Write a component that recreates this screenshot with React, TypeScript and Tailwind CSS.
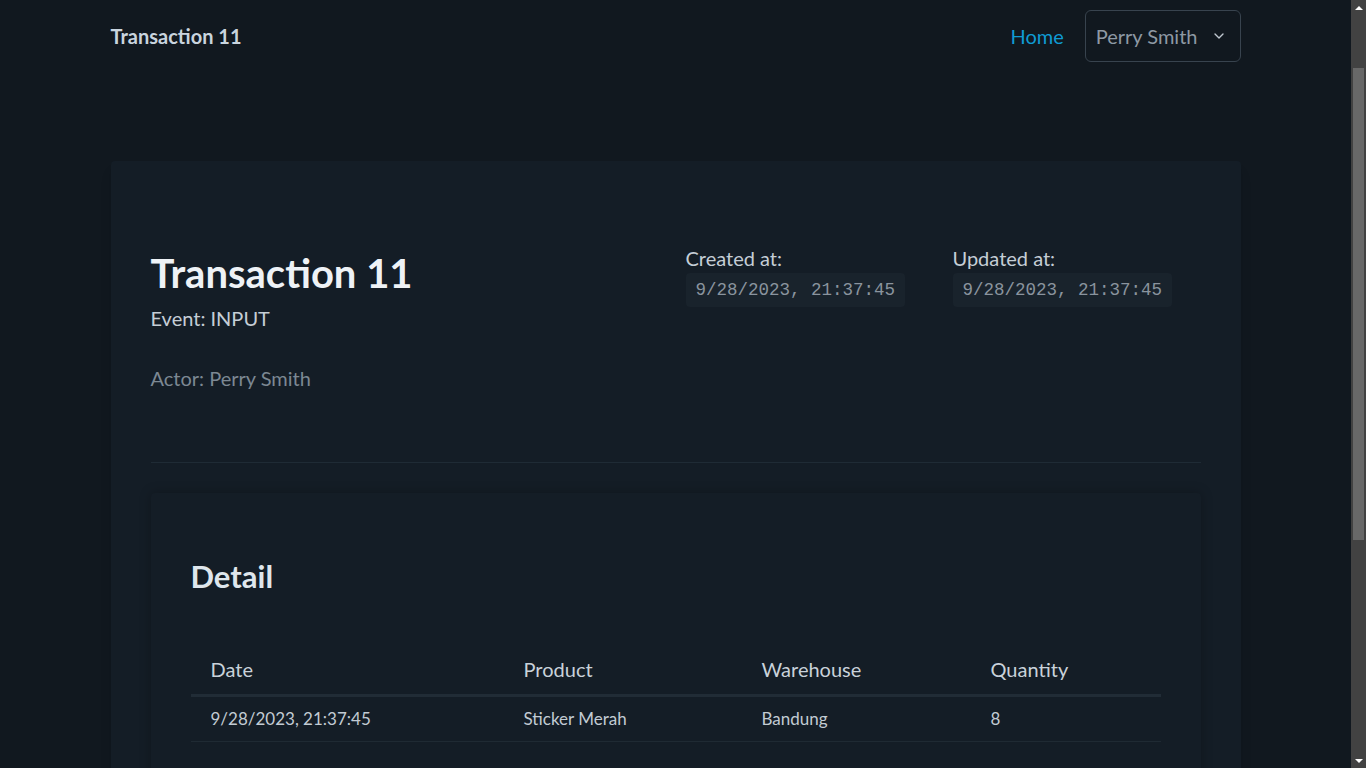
import React from 'react';
import { ChevronDown } from 'lucide-react';

const rows = [
  { date: '9/28/2023, 21:37:45', product: 'Sticker Merah', warehouse: 'Bandung', quantity: 8 },
];

const mono = { fontFamily: '"Liberation Mono", monospace' };

const App: React.FC = () => {
  return (
    <div className="flex h-screen overflow-hidden bg-[#11181f]" style={{ fontFamily: 'Lato, "Noto Sans", sans-serif' }}>
      <div className="flex-1 overflow-hidden text-[#d5dce3]">
        {/* Navbar */}
        <nav className="mx-auto flex h-[72px] w-[1130px] items-center justify-between">
          <span className="text-[20px] font-bold text-[#c9d4de]">Transaction 11</span>
          <div className="flex items-center gap-[21px]">
            <a className="text-[20px] text-[#0f9bd4]">Home</a>
            <button
              type="button"
              className="flex h-[52px] items-center gap-[13px] rounded-md border border-[#38434e] pl-[10px] pr-[13px] text-[20px] text-[#8e99a4]"
            >
              Perry Smith
              <ChevronDown className="h-4 w-4 text-[#c0c8d0]" />
            </button>
          </div>
        </nav>

        {/* Main card */}
        <div className="mx-auto mt-[89px] w-[1130px] rounded-sm bg-[#141d26] px-10 pb-10 pt-[88px] shadow-lg">
          <div className="flex">
            <div className="w-[535px]">
              <h1 className="text-[40px] font-bold leading-[48px] text-[#eef2f6]">Transaction 11</h1>
              <p className="mt-[6px] text-[20px] leading-[30px] text-[#c5ced6]">Event: INPUT</p>
              <p className="mt-[30px] text-[20px] leading-[30px] text-[#7c8893]">Actor: Perry Smith</p>
            </div>
            <div className="-mt-[6px] w-[267px]">
              <p className="text-[20px] leading-[30px] text-[#c5ced6]">Created at:</p>
              <code
                className="inline-block rounded bg-[#19232c] px-[10px] py-[5px] text-[17.5px] leading-[24px] text-[#8a949e]"
                style={mono}
              >
                9/28/2023, 21:37:45
              </code>
            </div>
            <div className="-mt-[6px]">
              <p className="text-[20px] leading-[30px] text-[#c5ced6]">Updated at:</p>
              <code
                className="inline-block rounded bg-[#19232c] px-[10px] py-[5px] text-[17.5px] leading-[24px] text-[#8a949e]"
                style={mono}
              >
                9/28/2023, 21:37:45
              </code>
            </div>
          </div>

          <hr className="mt-[69px] border-t border-[#1f2b35]" />

          {/* Detail card */}
          <div className="mt-[30px] rounded-sm bg-[#141d26] px-10 pb-10 pt-[60px] shadow-[0_0_12px_rgba(0,0,0,0.25)]">
            <h2 className="text-[31px] font-bold leading-[46px] text-[#dfe6ec]">Detail</h2>
            <table className="mt-[55px] w-full border-collapse text-left">
              <thead>
                <tr className="border-b-[3px] border-[#212c36]">
                  <th className="w-[313px] px-5 pb-[10px] text-[20px] font-normal leading-[30px] text-[#c9d2da]">Date</th>
                  <th className="w-[238px] px-5 pb-[10px] text-[20px] font-normal leading-[30px] text-[#c9d2da]">Product</th>
                  <th className="w-[229px] px-5 pb-[10px] text-[20px] font-normal leading-[30px] text-[#c9d2da]">Warehouse</th>
                  <th className="px-5 pb-[10px] text-[20px] font-normal leading-[30px] text-[#c9d2da]">Quantity</th>
                </tr>
              </thead>
              <tbody>
                {rows.map((row, i) => (
                  <tr key={i} className="border-b border-[#1f2a33]">
                    <td className="h-[46px] px-5 text-[17px] text-[#c2cbd3]">{row.date}</td>
                    <td className="h-[46px] px-5 text-[17px] text-[#c2cbd3]">{row.product}</td>
                    <td className="h-[46px] px-5 text-[17px] text-[#c2cbd3]">{row.warehouse}</td>
                    <td className="h-[46px] px-5 text-[17px] text-[#c2cbd3]">{row.quantity}</td>
                  </tr>
                ))}
              </tbody>
            </table>
          </div>
        </div>
      </div>

      {/* Scrollbar */}
      <div className="flex w-[15px] flex-col bg-[#424242]">
        <div className="flex h-[15px] items-center justify-center">
          <span className="h-0 w-0 border-x-[4px] border-b-[4px] border-x-transparent border-b-white" />
        </div>
        <div className="mx-[2px] mt-[53px] h-[472px] bg-[#686868]" />
        <div className="flex-1" />
        <div className="flex h-[15px] items-center justify-center">
          <span className="h-0 w-0 border-x-[4px] border-t-[4px] border-x-transparent border-t-white" />
        </div>
      </div>
    </div>
  );
};

export default App;
